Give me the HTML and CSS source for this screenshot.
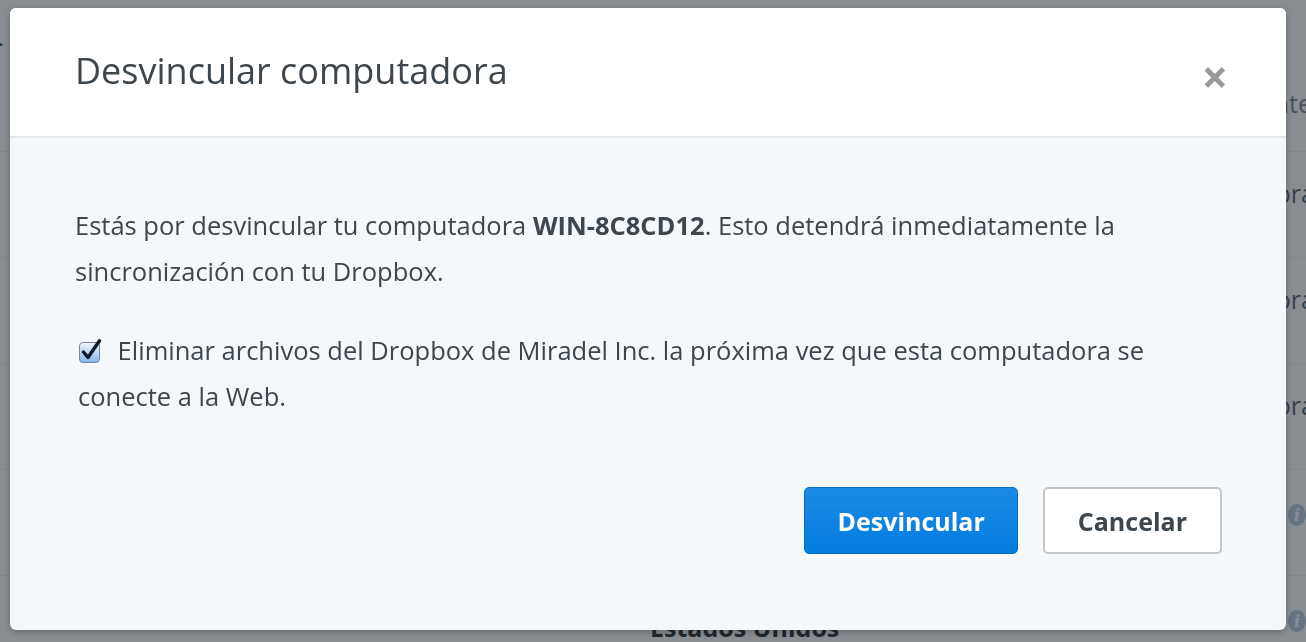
FILE: index.html
```html
<!DOCTYPE html>
<html lang="es">
<head>
  <meta charset="UTF-8" />
  <title>Desvincular computadora</title>
  <link rel="stylesheet" href="styles.css">
</head>
<body>

<!-- page behind the modal -->
<div class="page">
  <div class="page__top">.</div>
  <div class="devices">
    <div class="devices__row devices__head"><span>Reciente</span></div>
    <div class="devices__row"><span>Computadora</span></div>
    <div class="devices__row"><span>Computadora</span></div>
    <div class="devices__row"><span>Computadora</span></div>
    <div class="devices__row"><i class="info">i</i></div>
    <div class="devices__row"><i class="info">i</i></div>
  </div>
  <div class="page__country">Estados Unidos</div>
</div>

<div class="overlay"></div>

<!-- Modal -->
<div class="modal">
  <div class="modal__header">
    <h2>Desvincular computadora</h2>
    <span class="modal__close">&times;</span>
  </div>
  <div class="modal__body">
    <p class="modal__text">Estás por desvincular tu computadora <b>WIN-8C8CD12</b>. Esto detendrá inmediatamente la sincronización con tu Dropbox.</p>
    <label class="modal__check">
      <svg class="checkbox" width="25" height="25" viewBox="0 0 25 25">
        <defs>
          <linearGradient id="cb" x1="0" y1="0" x2="0" y2="1">
            <stop offset="0" stop-color="#eef5fc"/>
            <stop offset="0.5" stop-color="#bcd8f5"/>
            <stop offset="1" stop-color="#7fb4ec"/>
          </linearGradient>
        </defs>
        <rect x="1.5" y="3.5" width="20" height="20" rx="3.5" fill="url(#cb)" stroke="#7d8793"/>
        <path d="M5.5 13 L10 18.5 L21.5 1.8" fill="none" stroke="#0e1826" stroke-width="3.4" stroke-linecap="round" stroke-linejoin="round"/>
      </svg>
      Eliminar archivos del Dropbox de Miradel Inc. la próxima vez que esta computadora se conecte a la Web.
    </label>
    <div class="modal__actions">
      <button class="btn btn--primary">Desvincular</button>
      <button class="btn">Cancelar</button>
    </div>
  </div>
</div>

</body>
</html>
```

FILE: styles.css
```css
* {
  margin: 0;
  padding: 0;
  box-sizing: border-box;
}

body {
  font-family: "Open Sans", Arial, sans-serif;
  background: #fff;
  color: #3d464d;
  height: 642px;
  overflow: hidden;
}

/* page behind */
.page {
  position: relative;
  height: 642px;
  overflow: hidden;
}

.page__top {
  position: absolute;
  left: -2px;
  top: 22px;
  font-size: 22px;
  color: #3d464d;
}

.devices__row {
  height: 106px;
  border-bottom: 1px solid #f0f1f3;
  display: flex;
  align-items: flex-start;
  padding: 24px 0 0 1153px;
  font-size: 25px;
  line-height: 34px;
  color: #5c646c;
  white-space: nowrap;
}

.devices__head {
  height: 152px;
  padding-top: 86px;
  padding-left: 1212px;
  color: #80878e;
}

.info {
  margin: 10px 0 0 135px;
  width: 22px;
  height: 22px;
  border-radius: 50%;
  background: #b8cde4;
  color: #fff;
  font: italic bold 17px/22px Georgia, "DejaVu Serif", serif;
  text-align: center;
}

.page__country {
  position: absolute;
  left: 650px;
  top: 610px;
  font-size: 25px;
  font-weight: bold;
  color: #2e3438;
}

.overlay {
  position: fixed;
  inset: 0;
  background: rgba(20, 28, 36, 0.5);
}

/* modal */
.modal {
  position: fixed;
  left: 10px;
  top: 8px;
  width: 1276px;
  height: 622px;
  border-radius: 6px;
  overflow: hidden;
  background: #f5f8fb;
  box-shadow: 0 2px 6px rgba(0, 0, 0, 0.25);
  display: flex;
  flex-direction: column;
}

.modal__header {
  height: 130px;
  flex-shrink: 0;
  background: #fff;
  border-bottom: 2px solid #e6e7e8;
  display: flex;
  align-items: center;
  justify-content: space-between;
  padding: 0 58px 0 65px;
}

.modal__header h2 {
  font-size: 36px;
  font-weight: normal;
  color: #3d464d;
  margin-top: -4px;
}

.modal__close {
  font-size: 46px;
  font-weight: bold;
  color: #9a9a9a;
  line-height: 1;
  margin-top: 8px;
}

.modal__body {
  flex: 1;
  padding: 64px 64px 0 65px;
  font-size: 25.5px;
  line-height: 46px;
}

.modal__text {
  margin-bottom: 33px;
}

.modal__check {
  display: block;
  padding-left: 3px;
}

.checkbox {
  vertical-align: -4px;
  margin-right: 8px;
}

.modal__actions {
  display: flex;
  justify-content: flex-end;
  gap: 25px;
  margin-top: 68px;
}

.btn {
  height: 67px;
  padding: 0 33px;
  font-family: "Open Sans", Arial, sans-serif;
  font-size: 25px;
  font-weight: bold;
  color: #3d464d;
  background: #fff;
  border: 2px solid #c4c6c8;
  border-radius: 5px;
  cursor: pointer;
}

.btn--primary {
  padding: 0 32px;
  color: #fff;
  background: linear-gradient(#1b8be6, #037ce0);
  border: 1px solid #0a6cc0;
}
```
